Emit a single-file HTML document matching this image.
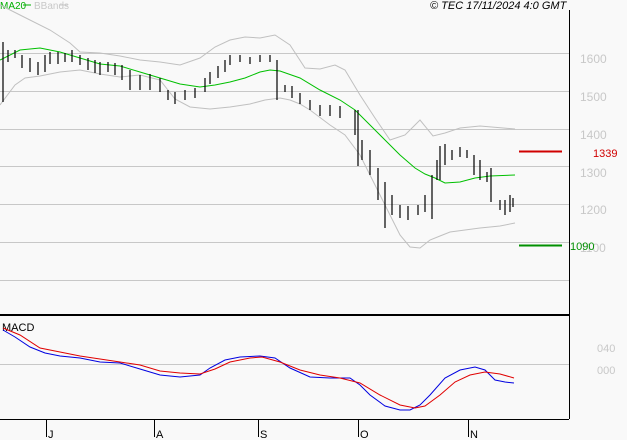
<!DOCTYPE html>
<html><head><style>
body{margin:0;background:#f9f9f9;}
svg{display:block;font-family:"Liberation Sans",sans-serif;}
</style></head><body>
<svg width="627" height="440" viewBox="0 0 627 440" xmlns="http://www.w3.org/2000/svg">
<rect width="627" height="440" fill="#f9f9f9"/>
<g stroke="#c8c8c8" stroke-width="1">
<line x1="0" y1="53.5" x2="569" y2="53.5"/>
<line x1="0" y1="91.5" x2="569" y2="91.5"/>
<line x1="0" y1="129.5" x2="569" y2="129.5"/>
<line x1="0" y1="166.5" x2="569" y2="166.5"/>
<line x1="0" y1="204.5" x2="569" y2="204.5"/>
<line x1="0" y1="242.5" x2="569" y2="242.5"/>
<line x1="0" y1="280.5" x2="569" y2="280.5"/>
<line x1="0" y1="364.5" x2="569" y2="364.5"/>
</g>
<g fill="#c8c8c8" font-size="12">
<text x="580" y="63">1600</text>
<text x="580" y="101">1500</text>
<text x="580" y="139">1400</text>
<text x="580" y="177">1300</text>
<text x="580" y="214">1200</text>
<text x="580" y="252">1100</text>
<text x="597" y="352" font-size="11">040</text>
<text x="597" y="374" font-size="11">000</text>
</g>
<line x1="569.5" y1="10" x2="569.5" y2="419" stroke="#000"/>
<line x1="0" y1="315" x2="569" y2="315" stroke="#000" stroke-width="2"/>
<line x1="0" y1="419.5" x2="569" y2="419.5" stroke="#000"/>
<g stroke="#000">
<line x1="46.5" y1="420" x2="46.5" y2="437"/><line x1="154.5" y1="420" x2="154.5" y2="437"/>
<line x1="258.5" y1="420" x2="258.5" y2="437"/><line x1="358.5" y1="420" x2="358.5" y2="437"/>
<line x1="468.5" y1="420" x2="468.5" y2="437"/>
</g>
<g font-size="11" fill="#000">
<text x="48" y="438">J</text><text x="156" y="438">A</text><text x="260" y="438">S</text><text x="360" y="438">O</text><text x="470" y="438">N</text>
<text x="2" y="331">MACD</text>
<text x="430" y="9" font-style="italic">© TEC 17/11/2024 4:0 GMT</text>
</g>
<text x="0" y="9" font-size="10" fill="#00b000">MA20</text>
<line x1="23" y1="5" x2="31" y2="5" stroke="#00b000"/>
<text x="34" y="9" font-size="10" fill="#c8c8c8">BBands</text>
<line x1="60" y1="5" x2="68" y2="5" stroke="#c8c8c8"/>
<g fill="none" stroke-width="1">
<polyline stroke="#c0c0c0" points="0,5 20,15 50,30 70,43 80,52 100,53 120,56 140,60 160,62 180,65 200,58 215,47 230,40 245,37 260,38 275,35 290,45 305,68 320,69 335,65 345,70 360,95 375,118 390,140 405,135 420,120 433,136 445,133 460,128 480,126 515,129"/>
<polyline stroke="#c0c0c0" points="0,105 15,85 25,78 40,76 60,72 80,70 100,74 120,77 140,75 160,80 175,99 190,107 210,109 230,107 250,104 265,100 280,98 290,100 300,104 310,110 330,125 345,135 360,155 375,185 390,215 400,235 410,247 420,248 430,240 440,236 450,232 465,230 480,228 500,226 515,223"/>
<polyline stroke="#00c000" points="0,60 20,50 40,48 60,52 80,58 100,64 120,66 140,72 160,78 180,84 200,87 215,85 230,82 245,78 260,72 270,70 280,71 300,78 320,90 340,100 355,110 370,125 385,140 400,155 415,168 425,174 435,178 445,183 460,182 475,178 490,176 515,175"/>
<polyline stroke="#0000e0" points="3,330 15,337 30,347 45,353 60,356 80,358 100,362 120,363 140,369 150,372 160,375 170,376 180,377 200,375 210,368 225,360 240,357 260,356 275,358 290,368 310,377 330,378 350,378 360,385 370,395 385,406 400,410 410,410 420,405 430,395 445,378 460,370 475,367 485,370 495,380 505,382 514,383"/>
<polyline stroke="#e00000" points="3,328 20,335 40,348 60,352 80,356 100,359 120,362 140,365 160,371 180,373 200,374 215,369 230,362 250,358 262,357 280,362 300,370 320,375 340,378 360,383 380,395 400,405 415,408 425,406 440,395 455,382 470,375 485,372 500,374 514,378"/>
</g>
<path stroke="#000" fill="none" stroke-width="1.2" d="M3,42V102 M8,50V62 M15,50V58 M22,55V68 M30,58V72 M38,62V75 M45,55V72 M50,52V64 M58,52V64 M65,53V62 M72,50V62 M80,55V65 M88,58V70 M95,60V73 M100,62V75 M108,62V72 M115,63V75 M122,65V80 M130,70V90 M140,75V90 M150,74V90 M160,78V92 M168,90V100 M175,92V104 M185,90V100 M195,88V98 M205,78V92 M210,72V84 M218,66V78 M225,60V72 M230,55V65 M240,55V62 M250,57V64 M260,55V62 M270,55V62 M277,60V100 M285,85V92 M292,86V98 M300,93V104 M310,100V110 M320,105V116 M330,105V116 M340,106V118 M355,110V135 M358,110V166 M362,140V160 M370,150V175 M378,168V200 M385,182V228 M392,195V215 M400,205V218 M408,206V220 M418,205V215 M425,195V212 M432,175V219 M437,160V180 M440,146V180 M445,144V165 M452,150V160 M460,147V157 M467,150V158 M474,155V175 M480,160V180 M487,172V182 M491,168V202 M500,200V210 M505,200V215 M510,195V212 M513,198V207"/>
<line x1="519" y1="151.5" x2="562" y2="151.5" stroke="#d00000" stroke-width="2"/>
<line x1="519" y1="245.5" x2="562" y2="245.5" stroke="#009000" stroke-width="2"/>
<text x="593" y="157" font-size="11" fill="#d00000">1339</text>
<text x="570" y="250" font-size="11" fill="#009000">1090</text>
</svg>
</body></html>
